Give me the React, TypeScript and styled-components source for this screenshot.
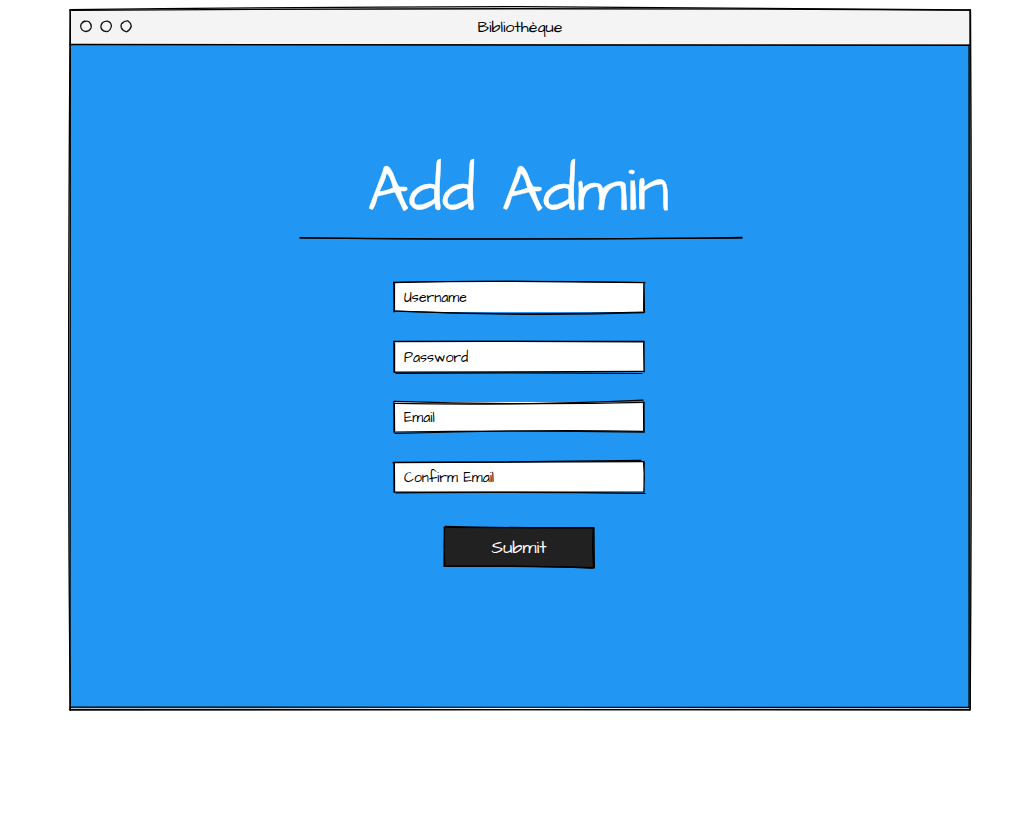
import React from "react";
import styled, { createGlobalStyle } from "styled-components";

const GlobalStyle = createGlobalStyle`
  *, *::before, *::after { box-sizing: border-box; }
  html, body { margin: 0; padding: 0; background: #ffffff; }
  body { font-family: "Architects Daughter", Lato, "Open Sans", sans-serif; color: #000000; }
`;

const Page = styled.div`
  display: flex;
  width: 1021px;
  height: 820px;
  padding: 10px 0 0 70px;
  background: #ffffff;
  overflow: hidden;
`;

const Window = styled.section`
  position: relative;
  display: flex;
  flex-direction: column;
  width: 900px;
  height: 700px;
`;

const TitleBar = styled.header`
  position: relative;
  display: flex;
  align-items: center;
  justify-content: center;
  height: 35px;
  flex: none;
  padding-bottom: 2px;
  background: #f4f4f4;
`;

const WindowTitle = styled.span`
  font-size: 16px;
  line-height: 20px;
`;

const Controls = styled.div`
  position: absolute;
  left: 10px;
  top: 10px;
  display: flex;
  gap: 8px;
`;

const Body = styled.main`
  position: relative;
  display: flex;
  flex-direction: column;
  align-items: center;
  flex: 1;
  margin-right: 1px;
  margin-bottom: 2px;
  padding-top: 104px;
  background: #2196f3;
`;

const Heading = styled.h1`
  position: relative;
  width: 444px;
  height: 89px;
  margin: 0 0 0 2px;
  padding-right: 4px;
  text-align: center;
  font-size: 65px;
  font-weight: 400;
  line-height: 85px;
  color: #ffffff;
  -webkit-text-stroke: 0.3px #ffffff;
`;

const Form = styled.form`
  display: flex;
  flex-direction: column;
  align-items: center;
  gap: 30px;
  margin-top: 44px;
  margin-right: 1px;
`;

const Field = styled.label`
  position: relative;
  display: flex;
  align-items: center;
  width: 250px;
  height: 30px;
  padding: 0 0 0 10px;
  background: #ffffff;
`;

const FieldLabel = styled.span`
  font-size: 14px;
  line-height: 20px;
  transform: translateY(0.3px) scaleY(1.1);
`;

const SubmitButton = styled.button`
  position: relative;
  display: flex;
  align-items: center;
  justify-content: center;
  width: 150px;
  height: 40px;
  margin-top: 5px;
  padding: 0;
  border: 0;
  background: #212121;
  color: #ffffff;
  font-family: inherit;
  font-size: 18px;
`;

const Ink = styled.svg`
  position: absolute;
  left: 0;
  top: 0;
  overflow: visible;
  pointer-events: none;
  fill: none;
  stroke: #000000;
  stroke-linecap: round;
`;

function Sketch({ w, h, strokes, weight = 1.2 }: { w: number; h: number; strokes: string[]; weight?: number }) {
  return (
    <Ink width={w} height={h} viewBox={`0 0 ${w} ${h}`} strokeWidth={weight} aria-hidden="true">
      {strokes.map((d) => (
        <path key={d} d={d} />
      ))}
    </Ink>
  );
}

const fields = [
  {
    label: "Username",
    strokes: [
      "M0 .6 Q100 -2 250 .5",
      "M-.5 .4 Q70 -1 120 -.6 T251 .6",
      "M250 0 L250.5 30 M249.8 1 L249.6 29",
      "M250 30 Q130 34 1 29.2",
      "M250 30.7 Q130 34.6 0 29",
      "M0 30 L-.3 0 M.5 29 L.5 1",
    ],
  },
  {
    label: "Password",
    strokes: [
      "M0 -.6 L250 -.6",
      "M0 -.4 Q130 -1 250 0",
      "M250 0 L250.2 30 M249.6 1 L250 29",
      "M250 29.4 L0 30.2",
      "M248 31.5 Q120 30.2 2 31.4",
      "M0 30 L-.2 0 M.6 30 L.6 1",
    ],
  },
  {
    label: "Email",
    strokes: [
      "M0 -.7 Q125 3.4 250 .4",
      "M1 1.4 Q120 4 249 -1.8",
      "M250 0 L250.2 30 M249.5 1 L249.7 29",
      "M250 30.2 Q125 28 0 30",
      "M249 29.4 Q140 27.2 1 31.5",
      "M0 30 L-.2 0 M.6 29 L.4 1",
    ],
  },
  {
    label: "Confirm Email",
    strokes: [
      "M-1 .7 L250 -.4",
      "M0 .4 Q120 .2 247 -1.6",
      "M249.5 0 Q251 15 249.8 30 M250.2 0 L250 29",
      "M250 30 L0 30",
      "M251 31.5 Q140 29.8 2 30.8",
      "M0 30 L-.1 0 M.6 30 L.4 1",
    ],
  },
];

const dots = [
  "M2 3 Q5 .2 8.7 1.5 Q12 4.4 11 8 Q9 11.7 5.8 11.5 Q1.4 11 .8 7 Q.4 4.5 2 3 Q3.5 1 5 1.3",
  "M1.5 3.5 Q4 1 7.5 1.2 Q11.2 2.4 11.4 6 Q10.5 10.6 7 11.6 Q3 11.6 1.3 8.7 Q.2 5.3 2.4 3",
  "M2 3.5 Q4.5 .6 8 1 Q11 2.8 11.3 6 Q10.4 9.8 6.8 11.8 Q2.8 11 1.3 7.7 Q.3 4 3 2.2",
];

export default function App() {
  return (
    <>
      <GlobalStyle />
      <Page>
        <Window>
          <TitleBar>
            <Controls>
              {dots.map((d) => (
                <svg key={d} width="12" height="13" viewBox="0 0 12 13" fill="none" stroke="#111" strokeWidth="1.3">
                  <path d={d} />
                </svg>
              ))}
            </Controls>
            <WindowTitle>Bibliothèque</WindowTitle>
          </TitleBar>
          <Body>
            <Heading>
              Add Admin
              <Sketch
                w={444}
                h={89}
                strokes={["M1 88.8 Q170 90.2 280 89.8 T443 88.4", "M1 88.8 Q100 90.3 210 90.2 T443 89.2"]}
              />
            </Heading>
            <Form onSubmit={(e: React.FormEvent) => e.preventDefault()}>
              {fields.map((f) => (
                <Field key={f.label}>
                  <Sketch w={250} h={30} strokes={f.strokes} />
                  <FieldLabel>{f.label}</FieldLabel>
                </Field>
              ))}
              <SubmitButton type="submit">
                Submit
                <Sketch
                  w={150}
                  h={40}
                  strokes={[
                    "M0 .5 L150 .8",
                    "M1 -.7 Q70 1 149 1",
                    "M150 1 L150.4 41 M149.2 1 Q147.8 20 149.5 40",
                    "M149 41.3 Q90 38 0 39.5",
                    "M150 40.5 Q100 39.3 1 39.2",
                    "M0 39 L.3 0 M1 39 Q-.8 20 .6 1",
                  ]}
                />
              </SubmitButton>
            </Form>
            <Sketch
              w={899}
              h={663}
              strokes={["M0 -.6 Q440 -.2 899 .2", "M0 -.4 L899 .4", "M899 0 L899 662", "M0 662.2 L899 662.3"]}
            />
          </Body>
          <Sketch
            w={900}
            h={700}
            weight={1.3}
            strokes={[
              "M0 .4 Q450 -2.8 900 .2",
              "M0 -.4 Q225 -3 450 -3.4 Q680 -2.6 900 0",
              "M900 0 Q899.5 350 900 700",
              "M900.5 0 Q902.5 350 900.2 699",
              "M900 700 L0 699.4",
              "M899 699.3 Q450 700.5 0 700",
              "M.3 700 Q-3 420 .2 0",
              "M0 700 Q.2 350 .3 0",
            ]}
          />
        </Window>
      </Page>
    </>
  );
}
